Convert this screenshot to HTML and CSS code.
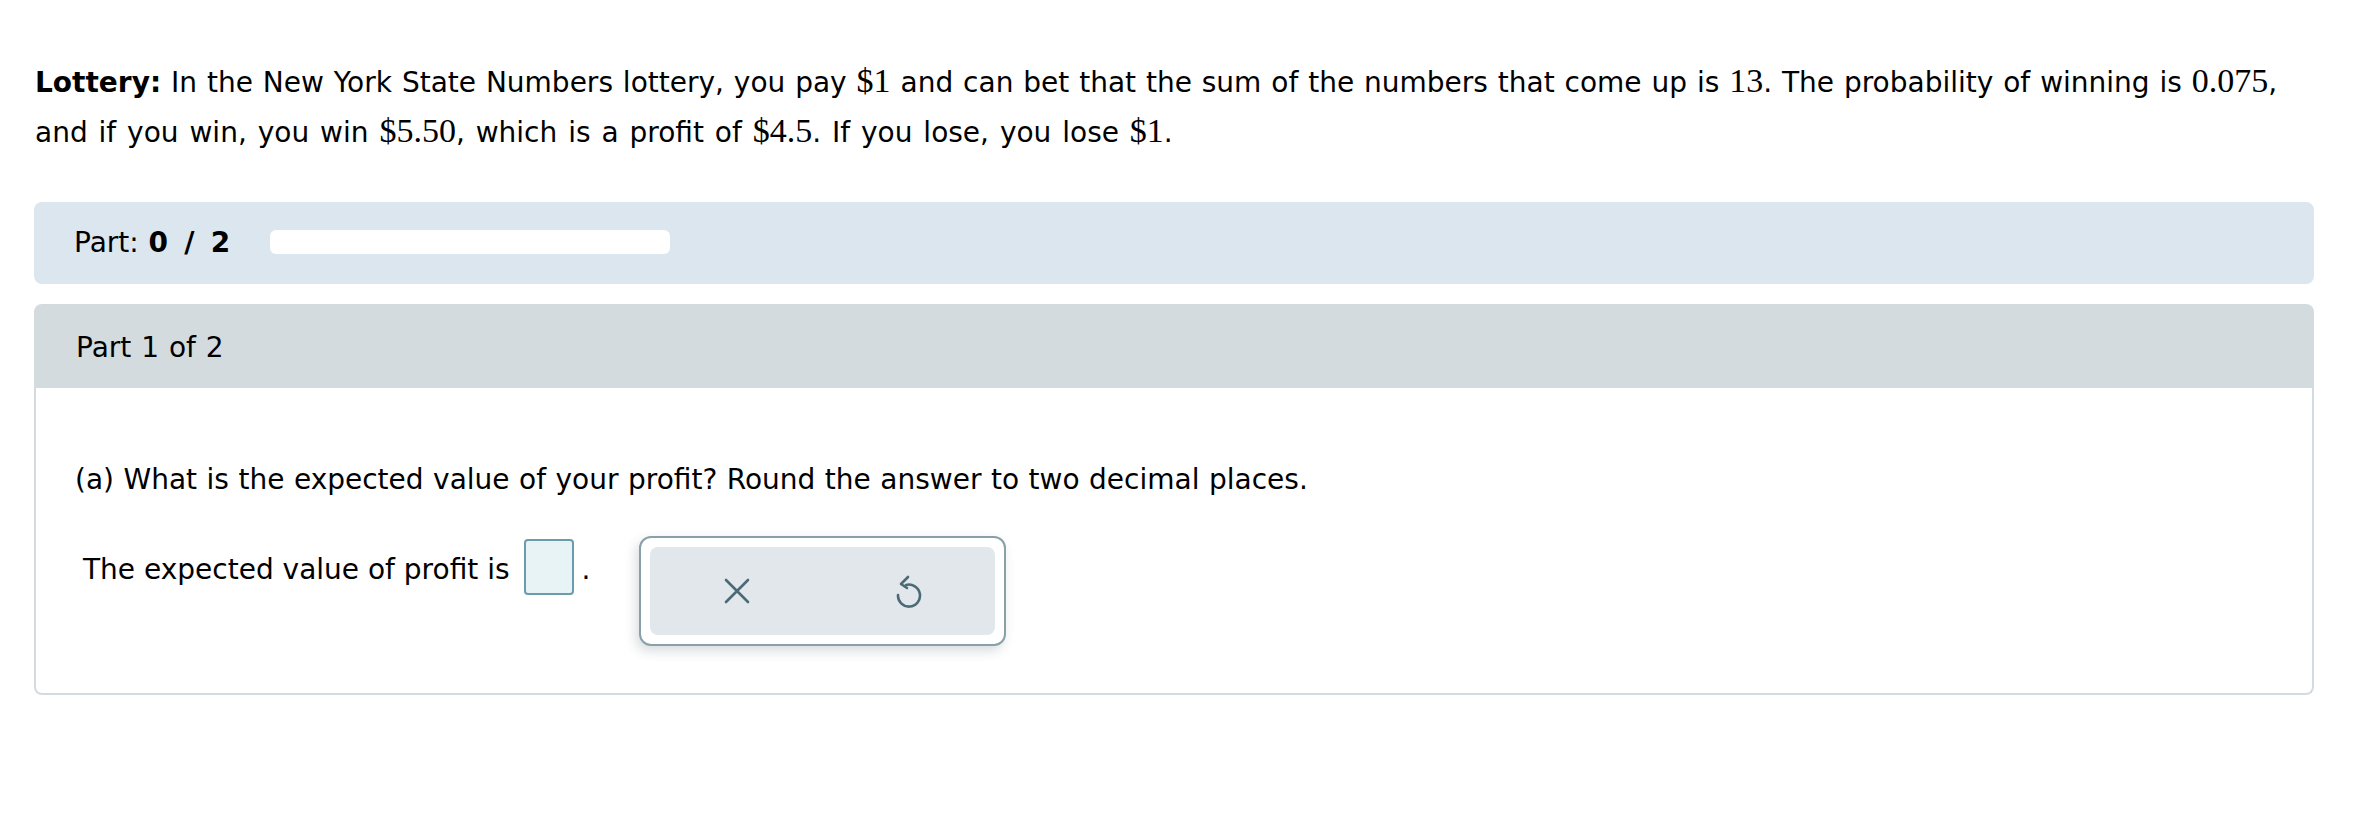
FILE: index.html
```html
<!DOCTYPE html>
<html lang="en">
<head>
<meta charset="utf-8">
<title>Lottery</title>
<link rel="stylesheet" href="styles.css">
</head>
<body>
<div class="page">
  <p class="problem"><b>Lottery:</b> In the New York State Numbers lottery, you pay <span class="m">$1</span> and can bet that the sum of the numbers that come up is <span class="m">13</span>. The probability of winning is <span class="m">0.075</span>,<br><span class="line2">and if you win, you win <span class="m">$5.50</span>, which is a profit of <span class="m">$4.5</span>. If you lose, you lose <span class="m">$1</span>.</span></p>

  <div class="progress-panel">
    <span class="part-label">Part: <b>0 <span class="slash">/</span> 2</b></span>
    <div class="bar"></div>
  </div>

  <section class="part">
    <div class="part-head">Part 1 of 2</div>
    <div class="part-body">
      <p class="question">(a) What is the expected value of your profit? Round the answer to two decimal places.</p>
      <div class="answer-row">
        <span class="answer-text">The expected value of profit is</span>
        <span class="input-box"></span>
        <span class="period">.</span>
        <div class="tools">
          <div class="tools-inner">
            <button class="tool" type="button" aria-label="Clear">
              <svg width="26" height="26" viewBox="0 0 26 26"><path d="M2 2 L24 24 M24 2 L2 24" fill="none" stroke="#4b6a77" stroke-width="2.6" stroke-linecap="round"/></svg>
            </button>
            <button class="tool" type="button" aria-label="Undo">
              <svg width="28" height="34" viewBox="0 0 28 34"><path d="M11 11 A 11 11 0 1 1 3 21" fill="none" stroke="#4b6a77" stroke-width="2.6" stroke-linecap="round"/><path d="M13 3 L6 10 L12 14" fill="none" stroke="#4b6a77" stroke-width="2.6" stroke-linecap="round" stroke-linejoin="round"/></svg>
            </button>
          </div>
        </div>
      </div>
    </div>
  </section>
</div>
</body>
</html>
```
FILE: styles.css
```css
* { box-sizing: border-box; }
body {
  margin: 0;
  background: #ffffff;
  color: #000000;
  font-family: "DejaVu Sans", Verdana, sans-serif;
  word-spacing: 1px;
}
.page {
  padding: 57px 50px 0 34px;
}
.problem {
  margin: 0 0 45px 1px;
  font-size: 28px;
  line-height: 48px;
}
.problem b { font-weight: bold; }
.line2 { word-spacing: 2px; }
.m {
  font-family: "Liberation Serif", "Times New Roman", serif;
  font-size: 34px;
  word-spacing: 0;
}
.progress-panel {
  height: 82px;
  background: #dce6ef;
  border-radius: 8px;
  display: flex;
  align-items: flex-start;
  padding: 21px 0 0 40px;
}
.part-label {
  font-size: 28px;
  line-height: 40px;
}
.slash {
  padding: 0 5.5px;
}
.bar {
  width: 400px;
  height: 24px;
  margin: 7px 0 0 40px;
  background: #ffffff;
  border-radius: 6px;
}
.part {
  margin-top: 20px;
}
.part-head {
  height: 84px;
  background: #d3dbdf;
  border-radius: 8px 8px 0 0;
  padding: 24px 0 0 42px;
  font-size: 28px;
  line-height: 40px;
}
.part-body {
  border: 2px solid #d3dbdf;
  border-top: none;
  border-radius: 0 0 8px 8px;
  padding: 72px 0 47px 39px;
}
.question {
  margin: 0;
  font-size: 28px;
  line-height: 40px;
  word-spacing: 0.6px;
}
.answer-row {
  display: flex;
  align-items: flex-start;
  margin-top: 36px;
  padding-left: 8px;
}
.answer-text {
  font-size: 28px;
  line-height: 40px;
  margin-top: 14px;
  word-spacing: 0;
}
.input-box {
  width: 50px;
  height: 56px;
  margin: 3px 0 0 14px;
  border: 2px solid #6a9dac;
  background: #e8f3f6;
  border-radius: 4px;
}
.period {
  font-size: 28px;
  line-height: 40px;
  margin: 14px 0 0 8px;
}
.tools {
  width: 367px;
  height: 110px;
  margin-left: 49px;
  border: 2px solid #8aa0a9;
  border-radius: 12px;
  padding: 9px;
  background: #ffffff;
  box-shadow: -3px 5px 12px rgba(40, 60, 70, 0.18);
}
.tools-inner {
  height: 100%;
  background: #e1e7ea;
  border-radius: 8px;
  display: flex;
}
.tool {
  flex: 1;
  border: none;
  background: transparent;
  padding: 0;
  display: flex;
  align-items: center;
  justify-content: center;
}
.tool svg { display: block; }
```
